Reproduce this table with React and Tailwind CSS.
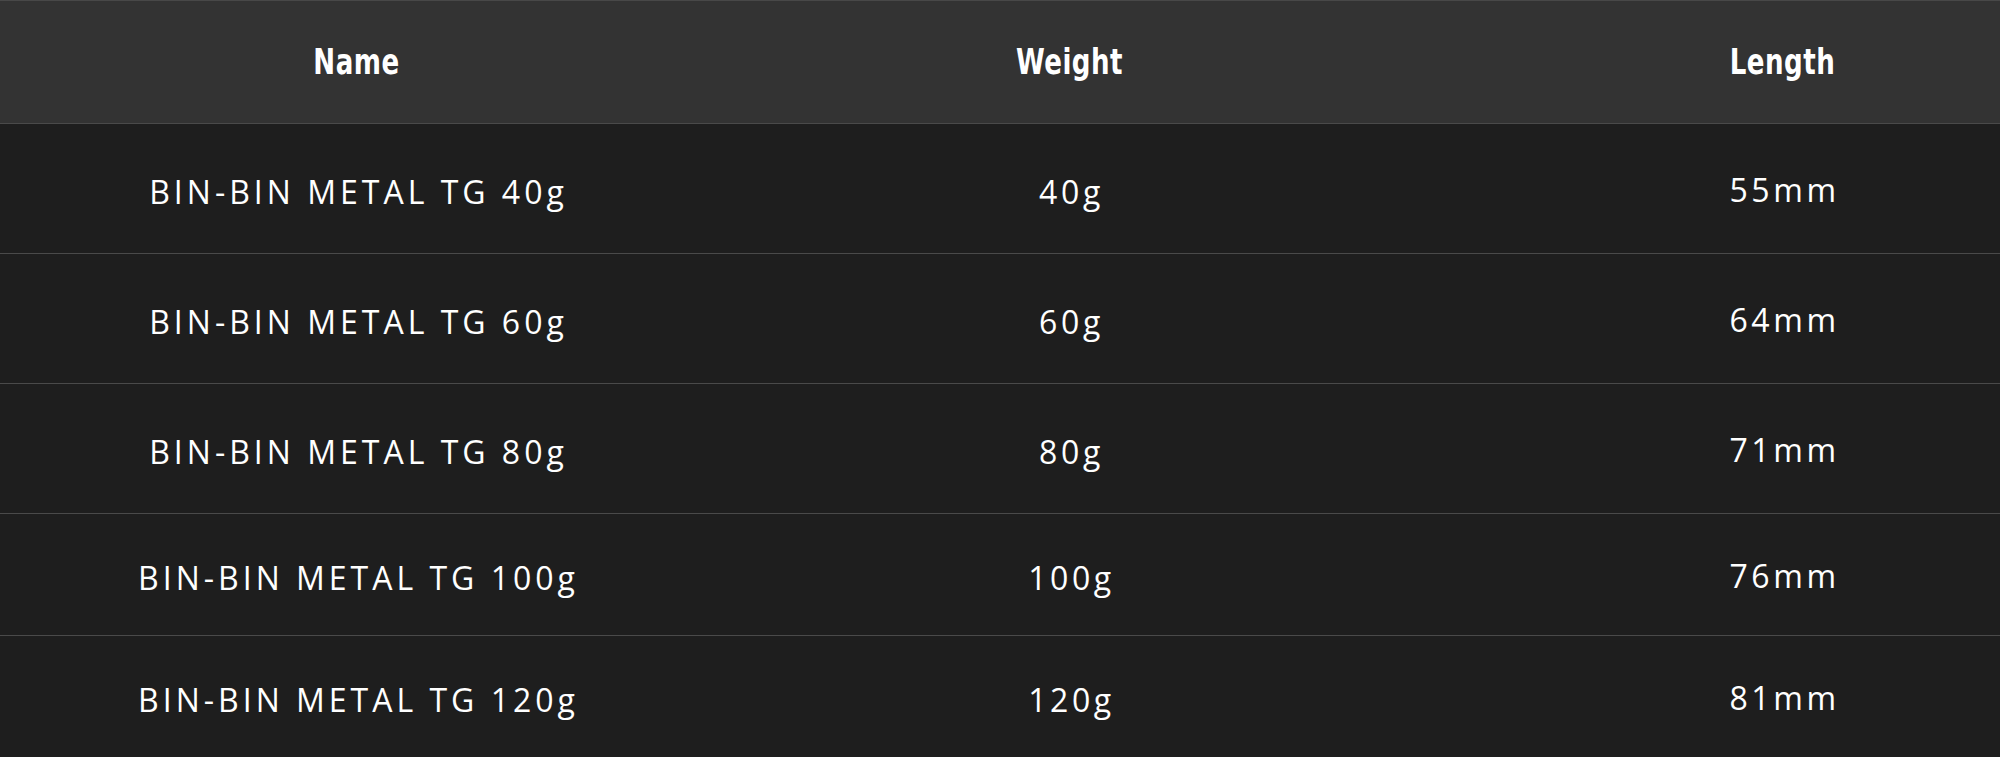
import React from "react";

const rows = [
  { name: "BIN-BIN METAL TG 40g", weight: "40g", length: "55mm", h: "h-[130px]" },
  { name: "BIN-BIN METAL TG 60g", weight: "60g", length: "64mm", h: "h-[130px]" },
  { name: "BIN-BIN METAL TG 80g", weight: "80g", length: "71mm", h: "h-[130px]" },
  { name: "BIN-BIN METAL TG 100g", weight: "100g", length: "76mm", h: "h-[122px]" },
  { name: "BIN-BIN METAL TG 120g", weight: "120g", length: "81mm", h: "h-[122px]" },
];

const headFont = {
  fontFamily: '"Liberation Sans Narrow", "DejaVu Sans Condensed", "Liberation Sans", sans-serif',
};

export default function App() {
  return (
    <div className="w-[2000px] h-[757px] overflow-hidden bg-[#1e1e1e]">
      <div className="w-[2140px]">
        <div className="flex h-[124px] bg-[#333333] border-t border-t-[#484848] border-b border-b-[#4a4a4a]">
          {["Name", "Weight", "Length"].map((t) => (
            <div key={t} className="w-[713px] flex items-center justify-center pt-[2px]">
              <span
                className="text-[29px] font-bold text-white tracking-[0.5px] scale-y-[1.25] inline-block"
                style={headFont}
              >
                {t}
              </span>
            </div>
          ))}
        </div>
        {rows.map((r) => (
          <div
            key={r.name}
            className={`flex ${r.h} bg-[#1e1e1e] border-b border-b-[#4a4a4a] text-white`}
          >
            <div className="w-[713px] flex items-center justify-center pt-[6px]">
              <span className="text-[32px] tracking-[4px] pl-[4px] font-['Open_Sans',sans-serif]">
                {r.name}
              </span>
            </div>
            <div className="w-[713px] flex items-center justify-center pt-[6px]">
              <span className="text-[32px] tracking-[3.6px] pl-[4px] font-['Open_Sans',sans-serif]">
                {r.weight}
              </span>
            </div>
            <div className="w-[713px] flex items-center justify-center pt-[2px]">
              <span className="text-[32px] tracking-[3.6px] pl-[4px] font-['Open_Sans',sans-serif]">
                {r.length}
              </span>
            </div>
          </div>
        ))}
      </div>
    </div>
  );
}
